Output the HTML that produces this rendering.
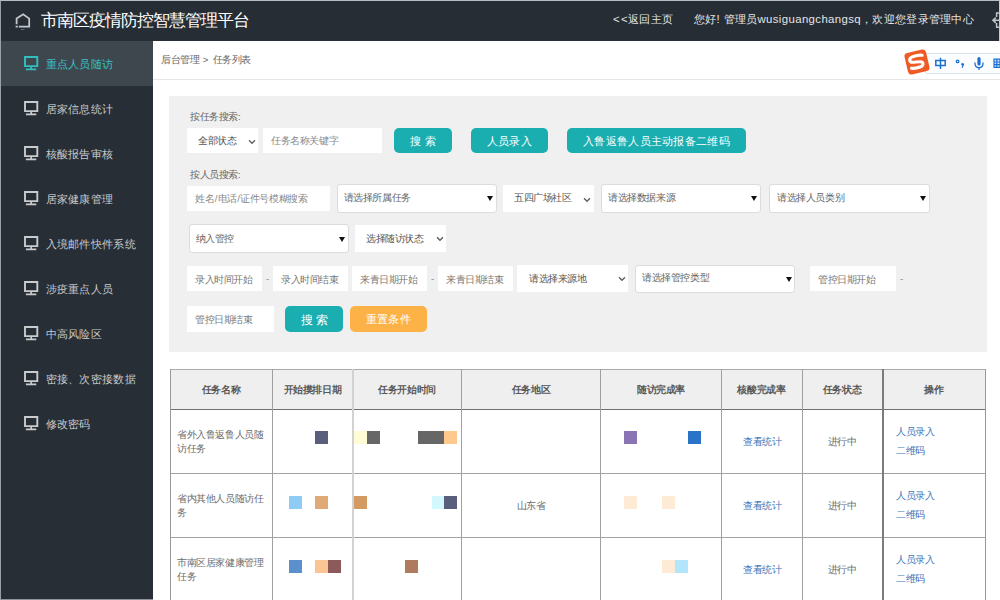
<!DOCTYPE html>
<html><head><meta charset="utf-8">
<style>
*{margin:0;padding:0;box-sizing:border-box}
html,body{width:1000px;height:600px;overflow:hidden;background:#fff;font-family:"Liberation Sans",sans-serif;position:relative}
.a{position:absolute;white-space:nowrap}
#frame{position:absolute;left:0;top:0;width:1000px;height:600px;border-top:1px solid #b9bcc0;border-left:1px solid #9aa0a5;pointer-events:none;z-index:50}
#hdr{position:absolute;left:0;top:0;width:1000px;height:41px;background:#262d34;border-right:1px solid #c8ccd0}
#side{position:absolute;left:0;top:41px;width:153px;height:559px;background:#272e35}
.nav{position:absolute;left:0;width:153px;height:45px}
.nav.act{background:#3f474e}
.nav .ic{position:absolute;left:24px;top:15px;width:15px;height:15px}
.nav .tx{position:absolute;left:45.5px;top:15px;font-size:11.4px;letter-spacing:0.3px;line-height:16px;color:#c9cbcd}
.nav.act .tx{color:#36c3cc}
.inp{position:absolute;background:#fff;font-size:9.6px;letter-spacing:-0.4px;color:#777;line-height:12px}
.sel{position:absolute;background:#fff;border:1px solid #dcdcdc;border-radius:3px;font-size:9.6px;letter-spacing:-0.4px;color:#666;line-height:12px}
.btn{position:absolute;background:#1aaeb1;border-radius:5px;color:#fff;font-size:11.4px;letter-spacing:0.28px;line-height:27px;text-align:center}
.tri{position:absolute;top:11px;width:0;height:0;border-left:3.5px solid transparent;border-right:3.5px solid transparent;border-top:5px solid #111}
.hl{height:1px;background:#a2a2a2}
.vl{height:232px;background:#a0a0a0}
.th{font-size:9.6px;letter-spacing:-0.4px;line-height:12px;color:#585858;text-align:center;font-weight:bold}
.td{font-size:9.6px;letter-spacing:-0.4px;line-height:14px;color:#6c6c6c}
.lk{font-size:9.6px;letter-spacing:-0.4px;line-height:12px;color:#3d76ba;white-space:nowrap}
.lbl{position:absolute;font-size:9.6px;letter-spacing:-0.4px;color:#666;line-height:12px}
</style></head><body>
<div id="hdr">
  <svg class="a" style="left:0.2px;top:0.6px" width="40" height="40" viewBox="0 0 40 40"><path d="M16.6 23.2V17.6L23.2 13.3L29.2 17.6V25.7H18.8M15.6 25.7H17.8" fill="none" stroke="#c4c7ca" stroke-width="1.8"/><path d="M21 28.5H24.5" stroke="#6a7a88" stroke-width="0.8"/></svg>
  <div class="a" style="left:40.5px;top:10.8px;font-size:17px;letter-spacing:-0.95px;line-height:20px;color:#fff">市南区疫情防控智慧管理平台</div>
  <div class="a" style="left:613px;top:10.8px;font-size:11.4px;letter-spacing:0.3px;line-height:16px;color:#e6e6e6">&lt;<span style="letter-spacing:0px;font-size:4px"> </span>&lt;返回主页</div>
  <div class="a" style="left:694px;top:10.8px;font-size:11.4px;letter-spacing:0.3px;line-height:16px;color:#e6e6e6">您好! 管理员<span style="letter-spacing:0.38px">wusiguangchangsq</span>，欢迎您登录管理中心</div>
</div>
<div id="side">
  <div class="nav act" style="top:0"><svg class="ic" viewBox="0 0 15 15"><path d="M1 1H13.3V10.1H1Z" fill="none" stroke="#2fbfc0" stroke-width="1.9"/><path d="M7.2 11V12.5M1.9 13.3H12.3" fill="none" stroke="#2fbfc0" stroke-width="1.7"/></svg><div class="tx">重点人员随访</div></div>
  <div class="nav" style="top:45px"><svg class="ic" viewBox="0 0 15 15"><path d="M1 1H13.3V10.1H1Z" fill="none" stroke="#c9cbcd" stroke-width="1.9"/><path d="M7.2 11V12.5M1.9 13.3H12.3" fill="none" stroke="#c9cbcd" stroke-width="1.7"/></svg><div class="tx">居家信息统计</div></div>
  <div class="nav" style="top:90px"><svg class="ic" viewBox="0 0 15 15"><path d="M1 1H13.3V10.1H1Z" fill="none" stroke="#c9cbcd" stroke-width="1.9"/><path d="M7.2 11V12.5M1.9 13.3H12.3" fill="none" stroke="#c9cbcd" stroke-width="1.7"/></svg><div class="tx">核酸报告审核</div></div>
  <div class="nav" style="top:135px"><svg class="ic" viewBox="0 0 15 15"><path d="M1 1H13.3V10.1H1Z" fill="none" stroke="#c9cbcd" stroke-width="1.9"/><path d="M7.2 11V12.5M1.9 13.3H12.3" fill="none" stroke="#c9cbcd" stroke-width="1.7"/></svg><div class="tx">居家健康管理</div></div>
  <div class="nav" style="top:180px"><svg class="ic" viewBox="0 0 15 15"><path d="M1 1H13.3V10.1H1Z" fill="none" stroke="#c9cbcd" stroke-width="1.9"/><path d="M7.2 11V12.5M1.9 13.3H12.3" fill="none" stroke="#c9cbcd" stroke-width="1.7"/></svg><div class="tx">入境邮件快件系统</div></div>
  <div class="nav" style="top:225px"><svg class="ic" viewBox="0 0 15 15"><path d="M1 1H13.3V10.1H1Z" fill="none" stroke="#c9cbcd" stroke-width="1.9"/><path d="M7.2 11V12.5M1.9 13.3H12.3" fill="none" stroke="#c9cbcd" stroke-width="1.7"/></svg><div class="tx">涉疫重点人员</div></div>
  <div class="nav" style="top:270px"><svg class="ic" viewBox="0 0 15 15"><path d="M1 1H13.3V10.1H1Z" fill="none" stroke="#c9cbcd" stroke-width="1.9"/><path d="M7.2 11V12.5M1.9 13.3H12.3" fill="none" stroke="#c9cbcd" stroke-width="1.7"/></svg><div class="tx">中高风险区</div></div>
  <div class="nav" style="top:315px"><svg class="ic" viewBox="0 0 15 15"><path d="M1 1H13.3V10.1H1Z" fill="none" stroke="#c9cbcd" stroke-width="1.9"/><path d="M7.2 11V12.5M1.9 13.3H12.3" fill="none" stroke="#c9cbcd" stroke-width="1.7"/></svg><div class="tx">密接、次密接数据</div></div>
  <div class="nav" style="top:360px"><svg class="ic" viewBox="0 0 15 15"><path d="M1 1H13.3V10.1H1Z" fill="none" stroke="#c9cbcd" stroke-width="1.9"/><path d="M7.2 11V12.5M1.9 13.3H12.3" fill="none" stroke="#c9cbcd" stroke-width="1.7"/></svg><div class="tx">修改密码</div></div>
</div>

<svg class="a" style="left:980px;top:8px" width="20" height="24" viewBox="980 8 20 24"><path d="M999 20.2H993.5M995.8 17.6L993 20.2L995.8 22.8" fill="none" stroke="#c0c4c8" stroke-width="1.6"/><path d="M999.5 13H996.6V17M996.6 23V27.2H999.5" fill="none" stroke="#c0c4c8" stroke-width="1.5"/></svg>
<!-- sogou ime bar -->
<div class="a" style="left:925px;top:53px;width:77px;height:21px;background:#fcfdff;border:1px solid #d9e1ea;border-radius:2px"></div>
<svg class="a" style="left:902px;top:47px" width="30" height="30" viewBox="0 0 30 30"><g transform="rotate(-13 15 15)"><rect x="4" y="4" width="22" height="22" rx="3.5" fill="#ee5b24"/><path d="M21.5 9.6C19.5 8.6 14 8.3 11 9C7.6 9.8 7.4 13.6 10.6 14.3C13.2 14.9 16.6 14.8 18.8 15.6C21.6 16.7 20.6 20 17.5 20.5C14.2 21 10.6 20.8 8.2 19.8" fill="none" stroke="#fff" stroke-width="3.1" stroke-linecap="round"/></g></svg>
<svg class="a" style="left:930px;top:50px" width="70" height="28" viewBox="930 50 70 28"><g fill="none" stroke="#1d6fcf"><path d="M935.8 60.6H945.2V65.6H935.8Z" stroke-width="1.5"/><path d="M940.5 57.8V69" stroke-width="1.5"/><circle cx="957.6" cy="61.4" r="1.3" stroke-width="1.2"/><rect x="994" y="59.2" width="7" height="8.2" fill="#d4e6fb" stroke="none"/><path d="M994 59.2H1000V67.4H994Z M994 62H1000 M994 64.7H1000 M996.8 59.2V67.4" stroke-width="1.2"/><path d="M974.9 62.4C974.9 65.9 976.8 67.6 979 67.6C981.2 67.6 983.1 65.9 983.1 62.4M979 67.6V69.4" stroke-width="1.3"/></g><g fill="#1d6fcf"><circle cx="962.6" cy="64.3" r="1.3"/><path d="M962.6 64.5L964 64.8L962.6 68L961.6 67.8Z"/><rect x="977.4" y="57" width="3.2" height="8.6" rx="1.6"/><rect x="978.4" y="68.6" width="1.2" height="1"/></g></svg>
<!-- breadcrumb -->
<div class="a" style="left:161px;top:54px;font-size:9.6px;letter-spacing:-0.4px;line-height:12px;color:#666">后台管理<span style="letter-spacing:0.75px"> &gt; </span>任务列表</div>
<div class="a" style="left:153px;top:79px;width:847px;height:1px;background:#e6e6e6"></div>

<!-- search panel -->
<div class="a" style="left:169px;top:96px;width:818px;height:256px;background:#f0f0f0"></div>
<div class="lbl" style="left:190px;top:111px">按任务搜索:</div>
<div class="inp" style="left:187px;top:128px;width:71px;height:25px"><span class="a" style="left:11px;top:7px;color:#555">全部状态</span><svg class="a" style="left:60.5px;top:10.5px" width="8" height="6" viewBox="0 0 8 6"><path d="M1 1.2L4 4.2L7 1.2" fill="none" stroke="#606060" stroke-width="1.4"/></svg></div>
<div class="inp" style="left:263px;top:128px;width:119px;height:25px"><span class="a" style="left:8px;top:7px;color:#888">任务名称关键字</span></div>
<div class="btn" style="left:394px;top:128px;width:58px;height:25px;font-size:11.4px;letter-spacing:0.3px">搜 索</div>
<div class="btn" style="left:471px;top:128px;width:77px;height:25px">人员录入</div>
<div class="btn" style="left:567px;top:128px;width:179px;height:25px">入鲁返鲁人员主动报备二维码</div>

<div class="lbl" style="left:190px;top:168.5px">按人员搜索:</div>
<div class="inp" style="left:187px;top:186px;width:143px;height:25px"><span class="a" style="left:8px;top:7px;color:#888">姓名<span style="margin:0 0.55px">/</span>电话<span style="margin:0 0.55px">/</span>证件号模糊搜索</span></div>
<div class="sel" style="left:337px;top:183.5px;width:160px;height:29px"><span class="a" style="left:5.5px;top:7.5px">请选择所属任务</span><div class="tri" style="left:149px"></div></div>
<div class="inp" style="left:503px;top:185px;width:91px;height:27px"><span class="a" style="left:11px;top:7px;color:#555">五四广场社区</span><svg class="a" style="left:80px;top:12px" width="8" height="6" viewBox="0 0 8 6"><path d="M1 1.2L4 4.2L7 1.2" fill="none" stroke="#606060" stroke-width="1.4"/></svg></div>
<div class="sel" style="left:601px;top:183.5px;width:160px;height:29px"><span class="a" style="left:6px;top:7.5px">请选择数据来源</span><div class="tri" style="left:149px"></div></div>
<div class="sel" style="left:769px;top:183.5px;width:161px;height:29px"><span class="a" style="left:7px;top:7.5px">请选择人员类别</span><div class="tri" style="left:150px"></div></div>

<div class="sel" style="left:189px;top:224px;width:160px;height:29px"><span class="a" style="left:5.5px;top:8px">纳入管控</span><div class="tri" style="left:148.5px;top:11.5px"></div></div>
<div class="inp" style="left:355px;top:225px;width:91px;height:27px"><span class="a" style="left:11px;top:8px;color:#555">选择随访状态</span><svg class="a" style="left:80.5px;top:11px" width="8" height="6" viewBox="0 0 8 6"><path d="M1 1.2L4 4.2L7 1.2" fill="none" stroke="#606060" stroke-width="1.4"/></svg></div>

<div class="inp" style="left:187px;top:266px;width:75px;height:25px"><span class="a" style="left:8px;top:8px">录入时间开始</span></div>
<div class="lbl" style="left:266px;top:273px;color:#888">-</div>
<div class="inp" style="left:273px;top:266px;width:75px;height:25px"><span class="a" style="left:8px;top:8px">录入时间结束</span></div>
<div class="inp" style="left:352px;top:266px;width:75px;height:25px"><span class="a" style="left:8px;top:8px">来青日期开始</span></div>
<div class="lbl" style="left:431px;top:273px;color:#888">-</div>
<div class="inp" style="left:438px;top:266px;width:75px;height:25px"><span class="a" style="left:8px;top:8px">来青日期结束</span></div>
<div class="inp" style="left:517px;top:265px;width:111px;height:27px"><span class="a" style="left:12px;top:8px;color:#555">请选择来源地</span><svg class="a" style="left:100.5px;top:11px" width="8" height="6" viewBox="0 0 8 6"><path d="M1 1.2L4 4.2L7 1.2" fill="none" stroke="#606060" stroke-width="1.4"/></svg></div>
<div class="sel" style="left:635px;top:264.5px;width:160px;height:28px"><span class="a" style="left:6px;top:6.5px">请选择管控类型</span><div class="tri" style="left:150px;top:11px"></div></div>
<div class="inp" style="left:810px;top:266px;width:86px;height:25px"><span class="a" style="left:8px;top:8px">管控日期开始</span></div>
<div class="lbl" style="left:900px;top:273px;color:#888">-</div>

<div class="inp" style="left:187px;top:306px;width:87px;height:26px"><span class="a" style="left:8px;top:8px">管控日期结束</span></div>
<div class="btn" style="left:285px;top:306px;width:58px;height:26px;line-height:28px;font-size:12.4px;letter-spacing:-0.2px">搜 索</div>
<div class="btn" style="left:350px;top:306px;width:77px;height:26px;line-height:26px;background:#fcb246">重置条件</div>

<!-- table -->
<div class="a" style="left:170px;top:369px;width:815px;height:40px;background:#efefef"></div>
<div class="a hl" style="left:170px;top:369px;width:816px;background:#aaa"></div>
<div class="a hl" style="left:170px;top:409px;width:816px;background:#707070"></div>
<div class="a hl" style="left:170px;top:473px;width:816px"></div>
<div class="a hl" style="left:170px;top:537px;width:816px"></div>
<div class="a vl" style="left:170px;top:369px;width:1px;background:#999"></div>
<div class="a vl" style="left:272px;top:369px;width:1px"></div>
<div class="a vl" style="left:352px;top:369px;width:2px;background:#d2d2d2"></div>
<div class="a vl" style="left:461px;top:369px;width:1px"></div>
<div class="a vl" style="left:600px;top:369px;width:1px"></div>
<div class="a vl" style="left:721px;top:369px;width:1px"></div>
<div class="a vl" style="left:802px;top:369px;width:1px"></div>
<div class="a vl" style="left:882px;top:369px;width:2px;background:#7c7c7c"></div>
<div class="a vl" style="left:985px;top:369px;width:1px;background:#999"></div>
<div class="a th" style="left:170px;width:102px;top:384px">任务名称</div>
<div class="a th" style="left:272px;width:81px;top:384px">开始摸排日期</div>
<div class="a th" style="left:353px;width:108px;top:384px">任务开始时间</div>
<div class="a th" style="left:461px;width:140px;top:384px">任务地区</div>
<div class="a th" style="left:601px;width:120px;top:384px">随访完成率</div>
<div class="a th" style="left:721px;width:81px;top:384px">核酸完成率</div>
<div class="a th" style="left:802px;width:80px;top:384px">任务状态</div>
<div class="a th" style="left:882px;width:104px;top:384px">操作</div>
<div class="a td" style="left:177px;top:427.5px">省外入鲁返鲁人员随<br>访任务</div>
<div class="a lk" style="left:722px;width:81px;text-align:center;top:436px">查看统计</div>
<div class="a td" style="left:802px;width:80px;text-align:center;top:435px">进行中</div>
<div class="a lk" style="left:896px;top:426px">人员录入</div>
<div class="a lk" style="left:896px;top:445px">二维码</div>
<div class="a td" style="left:177px;top:491.5px">省内其他人员随访任<br>务</div>
<div class="a lk" style="left:722px;width:81px;text-align:center;top:500px">查看统计</div>
<div class="a td" style="left:802px;width:80px;text-align:center;top:499px">进行中</div>
<div class="a lk" style="left:896px;top:490px">人员录入</div>
<div class="a lk" style="left:896px;top:509px">二维码</div>
<div class="a td" style="left:177px;top:555.5px">市南区居家健康管理<br>任务</div>
<div class="a lk" style="left:722px;width:81px;text-align:center;top:564px">查看统计</div>
<div class="a td" style="left:802px;width:80px;text-align:center;top:563px">进行中</div>
<div class="a lk" style="left:896px;top:554px">人员录入</div>
<div class="a lk" style="left:896px;top:573px">二维码</div>
<div class="a td" style="left:461px;width:140px;text-align:center;top:499px">山东省</div>
<div class="a" style="left:315px;top:431px;width:13px;height:13px;background:#5a5d7c"></div>
<div class="a" style="left:354px;top:431px;width:13px;height:13px;background:#fffbd2"></div>
<div class="a" style="left:367px;top:431px;width:13px;height:13px;background:#666666"></div>
<div class="a" style="left:418px;top:431px;width:26px;height:13px;background:#666666"></div>
<div class="a" style="left:444px;top:431px;width:13px;height:13px;background:#ffc98e"></div>
<div class="a" style="left:624px;top:431px;width:13px;height:13px;background:#8a74b4"></div>
<div class="a" style="left:688px;top:431px;width:13px;height:13px;background:#2a73c9"></div>
<div class="a" style="left:289px;top:496px;width:13px;height:13px;background:#8ecbf5"></div>
<div class="a" style="left:315px;top:496px;width:13px;height:13px;background:#dfaa76"></div>
<div class="a" style="left:354px;top:496px;width:13px;height:13px;background:#d39a62"></div>
<div class="a" style="left:432px;top:496px;width:12px;height:13px;background:#d2f7fd"></div>
<div class="a" style="left:444px;top:496px;width:13px;height:13px;background:#5a5d7c"></div>
<div class="a" style="left:624px;top:496px;width:13px;height:13px;background:#fdebd6"></div>
<div class="a" style="left:662px;top:496px;width:13px;height:13px;background:#fdebd6"></div>
<div class="a" style="left:289px;top:560px;width:13px;height:13px;background:#5b90cc"></div>
<div class="a" style="left:315px;top:560px;width:13px;height:13px;background:#fac592"></div>
<div class="a" style="left:328px;top:560px;width:13px;height:13px;background:#8c5a5a"></div>
<div class="a" style="left:405px;top:560px;width:13px;height:13px;background:#b07a5e"></div>
<div class="a" style="left:662px;top:560px;width:13px;height:13px;background:#fdebd6"></div>
<div class="a" style="left:675px;top:560px;width:13px;height:13px;background:#b2e6fc"></div>
<div class="a" style="left:0;top:599px;width:153px;height:1px;background:#8e949a;z-index:40"></div>
<div id="frame"></div>
</body></html>
